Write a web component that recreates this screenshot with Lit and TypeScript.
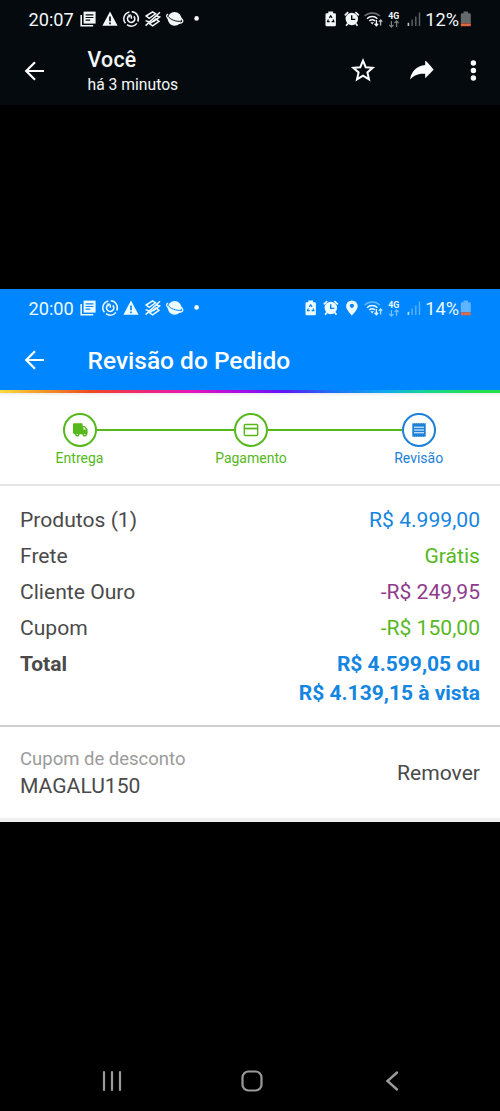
import { LitElement, html, css, svg } from "lit";
import { customElement, property } from "lit/decorators.js";

const cell = (body: unknown) => html`<svg width="21.8" height="22" viewBox="0 0 21.8 22">${body}</svg>`;

const icons: Record<string, () => unknown> = {
  news: () => cell(svg`
    <path d="M4.200 7v10.800h12" fill="none" stroke="currentColor" stroke-width="1.600"/>
    <path d="M6.600 3.600h12v12h-12z" fill="currentColor"/>
    <path d="M8.600 6.800h7.800M8.600 9.500h7.800M8.600 12.200h4.600" stroke="var(--bg)" stroke-width="1.200"/>`),
  warning: () => cell(svg`
    <path d="M11 3.400 18.600 17.800H3.400z" fill="currentColor"/>
    <path d="M11 8.600v4.600M11 14.400v1.800" stroke="var(--bg)" stroke-width="1.700"/>`),
  swirl: () => cell(svg`
    <g fill="none" stroke="currentColor" stroke-width="1.500">
      <path d="M9.400 3.900a7 7 0 0 0-3.900 11.400M7 16.700a7 7 0 0 0 9.900-1.300M17.800 13.600a7 7 0 0 0-6.100-9.800"/>
      <path d="M8.600 8.200a3.600 3.600 0 1 0 5.200.1" stroke-width="1.700"/>
    </g>
    <path d="M7.600 6.600l3.600-.2-1.200 3.600z" fill="currentColor"/><path d="M11.400 7.400v3.400" stroke="currentColor" stroke-width="1.300"/>`),
  bank: () => cell(svg`
    <g fill="none" stroke="currentColor" stroke-width="1.500">
      <path d="M4.200 8 10.600 3.800l3 2-6.400 4.600z"/>
      <path d="M17 13.400 10.600 17.800l-3-2 6.400-4.800z"/>
      <path d="M3.600 17.600 18 4.200M3.600 12.600l3.400 1.400 7.400-6M14.200 7.800l3.400 1.200-6.400 4.800"/>
    </g>`),
  planet: () => cell(svg`
    <circle cx="10.600" cy="10.800" r="6.900" fill="currentColor"/>
    <path d="M4.200 6.200C1.600 6.800 2.200 9.600 6 12.200c4.400 3 10.800 4 12.400 2 .9-1.200-.1-2.900-1.800-4.400" fill="none" stroke="currentColor" stroke-width="1.300"/>
    <path d="M4.200 8.400c1.800 3 8 5.600 12.800 4.800" fill="none" stroke="var(--bg)" stroke-width="1"/>`),
  dot: () => cell(svg`<circle cx="10.600" cy="10.400" r="2.300" fill="currentColor"/>`),
  saver: () => cell(svg`
    <path d="M8.300 3.600h4.800v1.600h1.600q1.200 0 1.200 1.200v10.600q0 1.200-1.200 1.200h-8q-1.200 0-1.200-1.200V6.400q0-1.200 1.200-1.200h1.600z" fill="currentColor"/>
    <path d="M9.300 9.800l1.400-2 1.400 2M8.400 11.400l-.9 2.200h2.200M13 11.400l.9 2.200h-2.300" fill="none" stroke="var(--bg)" stroke-width="1.200"/>`),
  alarm: () => cell(svg`
    <circle cx="10.800" cy="11" r="6.200" fill="currentColor"/>
    <path d="M3.800 7.400l3.400-3.200M17.800 7.400l-3.400-3.200M6.800 15.400l-1.700 2.300M14.800 15.400l1.700 2.300" stroke="currentColor" stroke-width="1.700"/>
    <path d="M10.700 7.200v4.200h3.600" fill="none" stroke="var(--bg)" stroke-width="1.400"/>`),
  pin: () => cell(svg`
    <path d="M10.900 3.400a5.800 5.800 0 0 0-5.800 5.800c0 3.600 5.800 9.200 5.800 9.200s5.800-5.600 5.800-9.200a5.800 5.800 0 0 0-5.800-5.800z" fill="currentColor"/>
    <circle cx="10.900" cy="8.800" r="2.100" fill="var(--bg)"/>`),
  wifi: () => cell(svg`
    <g fill="none" stroke="currentColor" stroke-width="1.500">
      <path d="M2.600 8.100a10.600 10.600 0 0 1 15.200 0" opacity=".45"/>
      <path d="M5 10.700a7.400 7.400 0 0 1 10.400 0M7.300 13a4.200 4.200 0 0 1 5.800 0"/>
    </g>
    <path d="M8.400 14.200h3.600l-1.800 2.200z" fill="currentColor"/>
    <g fill="none" stroke="currentColor" stroke-width="1.300">
      <path d="M14.400 12v5.600M12.600 15.800l1.800 1.900 1.800-1.900"/>
      <path d="M18.600 17.400v-5.200M16.900 13.700l1.700-1.800 1.700 1.800" opacity=".75"/>
    </g>`),
  signal: () => cell(svg`
    <path d="M5.400 18v-3.200" stroke="currentColor" stroke-width="1.600" opacity=".8"/>
    <path d="M9.100 18v-6.400M12.800 18V8.400M16.500 18V4.600" stroke="currentColor" stroke-width="1.400" opacity=".38"/>`),
};

@customElement("status-bar")
class StatusBar extends LitElement {
  @property() time = "";
  @property() level = "";
  @property() left = "";
  @property() right = "";

  static styles = css`
    :host { display: flex; height: 37px; align-items: center; padding: 0 28px 0 28.5px; box-sizing: border-box; }
    svg { display: block; flex: none; }
    .text { font-size: 18.2px; line-height: 22px; padding-top: 2px; }
    .left, .right { display: flex; align-items: center; }
    .left { padding-left: 3px; }
    .right { margin-left: auto; }
    .slot { width: 20.8px; }
    .wifi { width: 22.3px; }
    .signal { width: 22px; }
    .net { width: 19px; display: flex; flex-direction: column; align-items: center; height: 17px; padding-top: 3px; }
    .gen { font-size: 8.8px; font-weight: 700; line-height: 8px; }
    .net svg { opacity: .5; }
    .battery { margin-left: 1px; }
  `;

  render() {
    return html`
      <span class="text">${this.time}</span>
      <div class="left">${this.left.split(" ").map((n) => icons[n]())}</div>
      <div class="right">
        ${this.right.split(" ").map((n) => html`<div class="slot">${icons[n]()}</div>`)}
        <div class="wifi">${icons.wifi()}</div>
        <div class="net">
          <span class="gen">4G</span>
          <svg width="12" height="8" viewBox="0 0 12 8" fill="none" stroke="currentColor" stroke-width="1.200">
            <path d="M3.400 1v6M1.300 4.900l2.100 2.200 2.100-2.200M8.600 7V1M6.500 3.100l2.100-2.200 2.100 2.200"/>
          </svg>
        </div>
        <div class="signal">${icons.signal()}</div>
        <span class="text">${this.level}</span>
        <svg class="battery" width="12" height="22" viewBox="0 0 12 22">
          <path d="M3.600 3.400h4.400v1.800h1.600q1.200 0 1.200 1.200v8.600H.8V6.400q0-1.200 1.200-1.200h1.600z" fill="currentColor" opacity=".4"/>
          <path d="M.8 15.300h10v2.900H.8z" fill="#e2683f"/>
        </svg>
      </div>`;
  }
}

@customElement("order-steps")
class OrderSteps extends LitElement {
  static styles = css`
    :host { display: flex; height: 93px; box-sizing: border-box; padding: 20px 0 0 62.5px;
      background: linear-gradient(#e9e9f0, #fff 3px);
      border-bottom: 2px solid #e4e4e4; color: #55b81b; }
    .step { width: 34px; display: flex; flex-direction: column; align-items: center; }
    .ring { width: 34px; height: 34px; flex: none; box-sizing: border-box; border: 2px solid currentColor; border-radius: 50%;
      display: grid; place-items: center; }
    .label { font-size: 14px; line-height: 18px; margin-top: 2px; white-space: nowrap; }
    .line { height: 2.4px; margin-top: 15.6px; background: currentColor; }
    .first { width: 137.5px; }
    .second { width: 133.7px; }
    .current { color: #1b80d8; }
    svg { display: block; }
  `;

  render() {
    return html`
      <div class="step">
        <div class="ring"><svg width="18" height="16" viewBox="0 0 18 16">
          <path d="M3 1.300h7.800q.8 0 .8.800v1.800h2.200l2.800 3.400v4.900h-13q-1.600 0-1.600-1.600V2.100q0-.8 1-.8z" fill="currentColor"/>
          <path d="M12.400 5.200h1l1.700 2.300h-2.700z" fill="#fff"/>
          <circle cx="6.300" cy="12.400" r="2.200" fill="currentColor"/><circle cx="13.700" cy="12.400" r="2.200" fill="currentColor"/>
          <circle cx="6.300" cy="12.400" r=".7" fill="#fff"/><circle cx="13.700" cy="12.400" r=".7" fill="#fff"/>
        </svg></div>
        <span class="label">Entrega</span>
      </div>
      <div class="line first"></div>
      <div class="step">
        <div class="ring"><svg width="16" height="14" viewBox="0 0 16 14">
          <rect x="1.300" y="1.500" width="13.400" height="11" rx="1" fill="none" stroke="currentColor" stroke-width="1.400"/>
          <path d="M1.300 5.500h13.400" stroke="currentColor" stroke-width="1.800"/>
        </svg></div>
        <span class="label">Pagamento</span>
      </div>
      <div class="line second"></div>
      <div class="step current">
        <div class="ring"><svg width="14" height="16" viewBox="0 0 14 16">
          <path d="M.3 1.200l1 .4 1.100-.5 1.100.5 1.100-.5 1.200.5L7 1.100l1.200.5 1.200-.5 1.100.5 1.100-.5 1.100.5 1-.4v13.600l-1-.4-1.100.5-1.100-.5-1.100.5-1.200-.5-1.200.5-1.200-.5-1.200.5-1.100-.5-1.100.5-1.100-.5-1 .4z" fill="currentColor"/>
          <path d="M2 5.200h10M2 8h10M2 10.800h10" stroke="#fff" stroke-width="1"/>
        </svg></div>
        <span class="label">Revisão</span>
      </div>`;
  }
}

@customElement("app-root")
class AppRoot extends LitElement {
  static styles = css`
    :host { display: flex; flex-direction: column; width: 500px; height: 1111px; background: #000; overflow: hidden;
      font-family: Roboto, sans-serif; color: #fff; }
    svg { display: block; flex: none; }
    .viewer { --bg: #050a0e; background: #050a0e; height: 105px; flex: none; color: #f3f7f8; }
    .bar { display: flex; height: 68px; align-items: center; padding-left: 22px; }
    .names { margin-left: 41.5px; flex: 1; display: flex; flex-direction: column; }
    .name { font-size: 21.3px; line-height: 26px; font-weight: 500; letter-spacing: .3px; }
    .ago { font-size: 15.7px; line-height: 23px; }
    .actions { color: #fff; }
    .photo { margin-top: 184px; height: 533px; flex: none; background: #fff; display: flex; flex-direction: column; }
    .top { --bg: #0086ff; background: #0086ff; height: 101px; color: #edfbff; }
    .title { margin-left: 41.5px; padding-top: 1px; color: #fff; font-size: 24.5px; line-height: 30px; font-weight: 500; }
    .rainbow { height: 3px; background: linear-gradient(90deg, #f8dd3d 0, #f59a28 8%, #ee4b20 18%, #f02a68 27%, #e615b8 38%, #a80be8 48%, #5c18f5 57%, #1c70f5 66%, #10a9f0 77%, #16d695 85%, #22df4e 95%, #22df4e 100%); }
    .summary { height: 241px; box-sizing: border-box; padding: 20px 20px 0; border-bottom: 2px solid #cfcfcf;
      display: flex; flex-direction: column; gap: 7.5px; color: #4a4a4a; font-size: 21.1px; line-height: 28.5px; }
    .row { display: flex; justify-content: space-between; }
    .value { text-align: right; }
    .blue { color: #1485e0; }
    .green { color: #57b81f; }
    .purple { color: #8f3a8c; }
    .total { font-weight: 700; font-size: 21px; }
    .coupon { flex: 1; display: flex; align-items: center; justify-content: space-between; padding: 0 20px;
      border-bottom: 4px solid #efefef; color: #4a4a4a; font-size: 21.1px; }
    .code { display: flex; flex-direction: column; line-height: 26.5px; }
    .hint { color: #9b9b9b; font-size: 18.5px; }
    .nav { margin-top: auto; height: 60px; display: flex; justify-content: space-between; align-items: center;
      padding: 0 96px 0 100px; color: #9a9a9a; }
  `;

  private back() {
    return html`<svg width="24" height="24" viewBox="0 0 24 24" fill="none" stroke="#fff" stroke-width="2.200">
      <path d="M22 12H4.200M13 3.200 4.200 12l8.800 8.800"/></svg>`;
  }

  private row(label: string, value: unknown, tone: string, total = false) {
    return html`<div class="row ${total ? "total" : ""}"><span>${label}</span><span class="value ${tone}">${value}</span></div>`;
  }

  render() {
    return html`
      <div class="viewer">
        <status-bar time="20:07" level="12%" left="news warning swirl bank planet dot" right="saver alarm"></status-bar>
        <div class="bar">
          ${this.back()}
          <div class="names"><span class="name">Você</span><span class="ago">há 3 minutos</span></div>
          <div class="actions">
            <svg width="150" height="30" viewBox="0 0 150 30">
              <path d="M13 4.600l2.700 6.600 7 .6-5.300 4.600 1.600 6.900-6-3.700-6 3.700 1.600-6.900-5.300-4.600 7-.6z" fill="none" stroke="currentColor" stroke-width="2"/>
              <path d="M75.200 4.800Q76.500 4.800 83.600 13.700L75.200 22.300V17.800c-5.600-.4-10.400.7-15.200 5.600 1.400-8.200 6.800-13.400 15.200-14.400z" fill="currentColor"/>
              <g fill="currentColor"><circle cx="123.400" cy="7" r="2.700"/><circle cx="123.400" cy="14.500" r="2.700"/><circle cx="123.400" cy="22" r="2.700"/></g>
            </svg>
          </div>
        </div>
      </div>
      <div class="photo">
        <div class="top">
          <status-bar time="20:00" level="14%" left="news swirl warning bank planet dot" right="saver alarm pin"></status-bar>
          <div class="bar">${this.back()}<span class="title">Revisão do Pedido</span></div>
        </div>
        <div class="rainbow"></div>
        <order-steps></order-steps>
        <div class="summary">
          ${this.row("Produtos (1)", "R$ 4.999,00", "blue")}
          ${this.row("Frete", "Grátis", "green")}
          ${this.row("Cliente Ouro", "-R$ 249,95", "purple")}
          ${this.row("Cupom", "-R$ 150,00", "green")}
          ${this.row("Total", html`R$ 4.599,05 ou<br />R$ 4.139,15 à vista`, "blue", true)}
        </div>
        <div class="coupon">
          <div class="code"><span class="hint">Cupom de desconto</span><span>MAGALU150</span></div>
          <span>Remover</span>
        </div>
      </div>
      <div class="nav">
        <svg width="24" height="24" viewBox="0 0 24 24" stroke="currentColor" stroke-width="2.200" stroke-linecap="round"><path d="M4 3v18M12 3v18M20 3v18"/></svg>
        <svg width="24" height="24" viewBox="0 0 24 24" fill="none" stroke="currentColor" stroke-width="2.200"><rect x="2.500" y="2.500" width="19" height="19" rx="6"/></svg>
        <svg width="24" height="24" viewBox="0 0 24 24" fill="none" stroke="currentColor" stroke-width="2.400" stroke-linecap="round"><path d="M17 3.500 7.500 12l9.500 8.500"/></svg>
      </div>`;
  }
}
